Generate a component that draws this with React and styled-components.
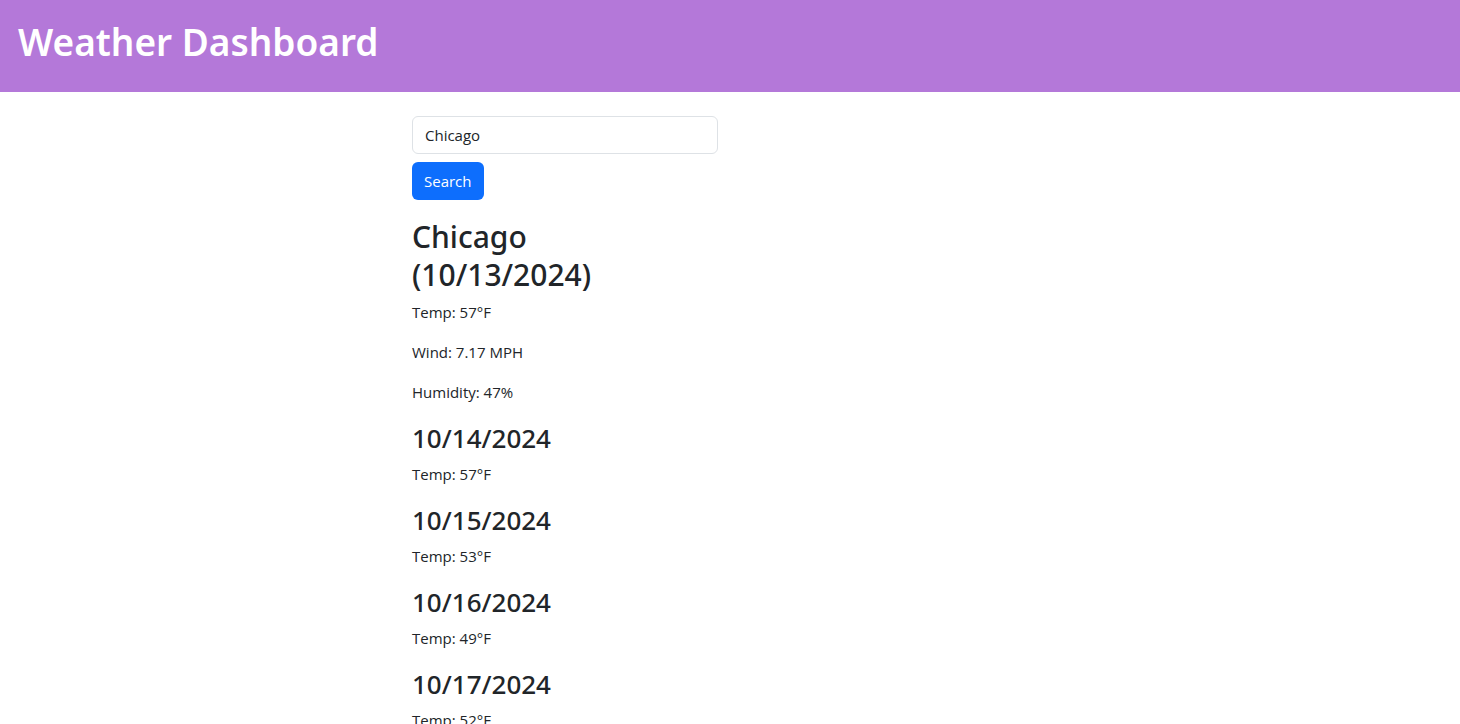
import React from "react";
import styled, { createGlobalStyle } from "styled-components";

const GlobalStyle = createGlobalStyle`
  *, *::before, *::after { box-sizing: border-box; }
  html { scrollbar-width: none; }
  body {
    margin: 0;
    font-family: "Open Sans", "Noto Sans", sans-serif;
    font-size: 15px;
    line-height: 24px;
    color: #212529;
    background: #fff;
  }
`;

const Header = styled.header`
  padding: 18px 18px 26px;
  background: #b478d9;
  color: #fff;
`;

const PageTitle = styled.h1`
  margin: 0;
  font-family: "Noto Sans", sans-serif;
  font-size: 37px;
  line-height: 48px;
  font-weight: 600;
`;

const Page = styled.div`
  display: grid;
  grid-template-columns: 412fr 306fr 742fr;
  padding-top: 24px;
`;

const Main = styled.main`
  grid-column: 2;
  min-width: 0;
`;

const SearchForm = styled.form`
  display: flex;
  flex-direction: column;
  align-items: flex-start;
  gap: 8px;
`;

const SearchInput = styled.input`
  width: 100%;
  height: 38px;
  padding: 6px 12px;
  border: 1px solid #dee2e6;
  border-radius: 6px;
  font: inherit;
  color: inherit;
  background: #fff;
`;

const SearchButton = styled.button`
  height: 38px;
  padding: 6px 12px;
  border: 0;
  border-radius: 6px;
  font: inherit;
  color: #fff;
  background: #0d6efd;
  cursor: pointer;
`;

const Current = styled.section`
  width: 62%;
  margin-top: 18px;
`;

const City = styled.h2`
  margin: 0 0 6px;
  font-family: "Noto Sans", sans-serif;
  font-size: 30px;
  line-height: 38px;
  font-weight: 500;
`;

const ForecastDay = styled.article`
  padding-top: 1px;
`;

const Day = styled.h3`
  margin: 0 0 7px;
  font-family: "Noto Sans", sans-serif;
  font-size: 26px;
  line-height: 34px;
  font-weight: 500;
`;

const Reading = styled.p`
  margin: 0 0 16px;
`;

const forecast = [
  { date: "10/14/2024", temp: 57 },
  { date: "10/15/2024", temp: 53 },
  { date: "10/16/2024", temp: 49 },
  { date: "10/17/2024", temp: 52 },
];

export default function App() {
  return (
    <>
      <GlobalStyle />
      <Header>
        <PageTitle>Weather Dashboard</PageTitle>
      </Header>
      <Page>
        <Main>
          <SearchForm onSubmit={(event) => event.preventDefault()}>
            <SearchInput type="text" aria-label="City" defaultValue="Chicago" />
            <SearchButton type="submit">Search</SearchButton>
          </SearchForm>
          <Current>
            <City>Chicago (10/13/2024)</City>
            <Reading>Temp: 57°F</Reading>
            <Reading>Wind: 7.17 MPH</Reading>
            <Reading>Humidity: 47%</Reading>
          </Current>
          {forecast.map(({ date, temp }) => (
            <ForecastDay key={date}>
              <Day>{date}</Day>
              <Reading>Temp: {temp}°F</Reading>
            </ForecastDay>
          ))}
        </Main>
      </Page>
    </>
  );
}
